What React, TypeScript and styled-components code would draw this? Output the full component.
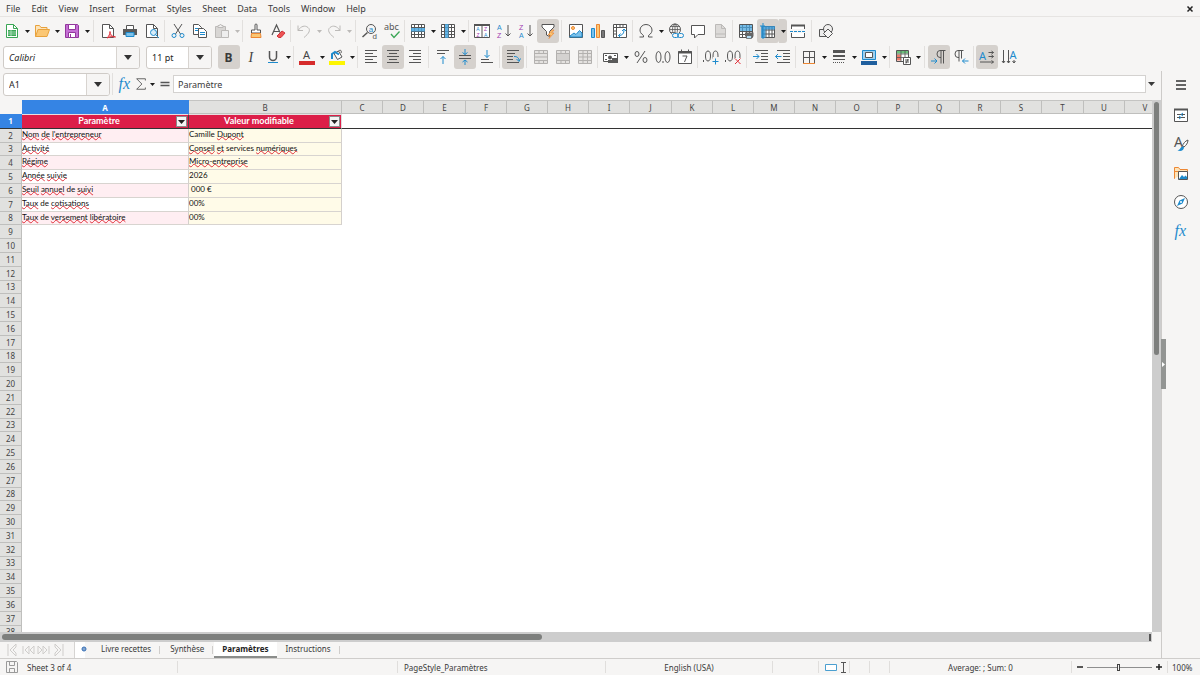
import React from "react";
import styled, { createGlobalStyle, css } from "styled-components";

const Global = createGlobalStyle`
  *, *::before, *::after { box-sizing: border-box; }
  body {
    margin: 0;
    background: #f6f5f4;
    color: #3a3a3a;
    font-family: "Noto Sans", "Open Sans", sans-serif;
    font-size: 9px;
  }
  button, input, select { font: inherit; color: inherit; margin: 0; }
  button { border: 0; padding: 0; background: none; }
  svg { display: block; flex: none; overflow: visible; }
`;

const INK = "#555";
const BLUE = "#1e8bcd";
const ORANGE = "#ed8733";
const GREY = "#bcbab8";
const PLUM = "#a03ab0";

/* ---------- frame ---------- */

const Window = styled.div`
  display: flex;
  flex-direction: column;
  height: 100vh;
  overflow: hidden;
`;

const MenuBar = styled.nav`
  display: flex;
  align-items: center;
  height: 17px;
  flex: none;
  padding: 1px 5px 0 6px;
  border-bottom: 1px solid #e6e4e2;
`;

const MenuItem = styled.button`
  margin-right: 11px;
  line-height: 16px;
`;

const CloseButton = styled.button`
  margin-left: auto;
  width: 11px;
  height: 12px;
  display: grid;
  place-items: center;
`;

const Toolbar = styled.div<{ $first?: boolean }>`
  display: flex;
  align-items: center;
  flex: none;
  height: ${(p) => (p.$first ? 28 : 26)}px;
  padding: ${(p) => (p.$first ? "0 1px" : "0 3px 2px")};
`;

const ToolButton = styled.button<{ $on?: boolean }>`
  width: 22px;
  height: 24px;
  flex: none;
  display: grid;
  place-items: center;
  border-radius: 3px;
  background: ${(p) => (p.$on ? "#d5d1cd" : "transparent")};
`;

const ArrowButton = styled.button<{ $on?: boolean; $dim?: boolean }>`
  width: 8px;
  height: 24px;
  flex: none;
  display: grid;
  place-items: center;
  color: ${(p) => (p.$dim ? "#bcbab8" : "#1c1c1c")};
  ${(p) => p.$on && css`background: #d5d1cd; border-radius: 0 3px 3px 0;`}
`;

const Separator = styled.span<{ $wide?: boolean }>`
  flex: none;
  width: 1px;
  height: 22px;
  margin: 0 ${(p) => (p.$wide ? 3 : 2)}px 0 ${(p) => (p.$wide ? 2 : 1)}px;
  background: #e2e0de;
`;

const Combo = styled.label<{ $width: number }>`
  display: grid;
  grid-template-columns: 1fr 23px;
  align-items: stretch;
  flex: none;
  width: ${(p) => p.$width}px;
  height: 23px;
  border: 1px solid #cfcbc7;
  border-radius: 3px;
  background: #fff;
  overflow: hidden;
`;

const ComboSelect = styled.select<{ $italic?: boolean }>`
  grid-area: 1 / 1 / 2 / 3;
  appearance: none;
  border: 0;
  outline: 0;
  padding: 0 5px;
  background: transparent;
  color: #1f1f1f;
  font-style: ${(p) => (p.$italic ? "italic" : "normal")};
`;

const ComboArrow = styled.span`
  grid-area: 1 / 2;
  display: grid;
  place-items: center;
  border-left: 1px solid #d8d4d0;
  background: #f6f5f4;
  color: #333;
  pointer-events: none;
`;

const Fonts = styled.div`
  display: flex;
  gap: 6px;
  margin-right: 6px;
`;

const Main = styled.div`
  display: flex;
  flex: 1;
  min-height: 0;
  border-bottom: 1px solid #cfcdcb;
`;

const Work = styled.div`
  display: flex;
  flex-direction: column;
  flex: 1;
  min-width: 0;
`;

const FormulaBar = styled.div`
  display: flex;
  align-items: center;
  flex: none;
  height: 29px;
  padding: 0 4px 3px 3px;
`;

const FormulaButton = styled.button<{ $width: number }>`
  width: ${(p) => p.$width}px;
  height: 22px;
  flex: none;
  display: grid;
  place-items: center;
`;

const FormulaInput = styled.input`
  flex: 1;
  min-width: 0;
  height: 18px;
  border: 1px solid #d4d2d0;
  padding: 0 4px;
  background: #fff;
  outline: 0;
`;

/* ---------- sheet ---------- */

const SheetArea = styled.div`
  display: grid;
  grid-template-columns: 1fr 9px;
  grid-template-rows: 1fr 10px;
  flex: 1;
  min-height: 0;
`;

const SheetClip = styled.div`
  overflow: hidden;
  min-width: 0;
  min-height: 0;
  background: #fff;
`;

const VScroll = styled.div`
  padding: 2px 1px 2px 2px;
  background: #cdcdcd;
`;

const VThumb = styled.div`
  width: 5px;
  height: 48%;
  border-radius: 3px;
  background: #7d7f7d;
`;

const HScroll = styled.div`
  display: flex;
  align-items: center;
  justify-content: space-between;
  padding: 0 1px 0 2px;
  background: #cdcdcd;
`;

const HThumb = styled.div`
  width: 47%;
  height: 6px;
  border-radius: 3px;
  background: #7d7f7d;
`;

const HEnd = styled.span`
  width: 2px;
  height: 7px;
  background: #555;
`;

const Grid = styled.table`
  table-layout: fixed;
  width: 1px;
  border-collapse: separate;
  border-spacing: 0;
`;

const Col = styled.col<{ $w: number }>`
  width: ${(p) => p.$w}px;
`;

const Row = styled.tr<{ $h: number }>`
  height: ${(p) => p.$h}px;
`;

const headCell = css`
  padding: 0;
  font-size: 8px;
  font-weight: 400;
  line-height: 12px;
  text-align: center;
  overflow: hidden;
  color: #444;
  background: #e1e1df;
  border-right: 1px solid #bfbfbd;
`;

const Corner = styled.td`
  padding: 0;
  background: #f6f5f4;
`;

const ColHead = styled.th<{ $on?: boolean }>`
  ${headCell}
  padding-top: 1px;
  line-height: 11px;
  border-top: 1px solid #c4c4c2;
  border-bottom: 1px solid #bfbfbd;
  ${(p) => p.$on && css`
    background: #3584e4; color: #fff; font-weight: 700;
    border-color: #3584e4;
  `}
`;

const RowHead = styled.th<{ $on?: boolean }>`
  ${headCell}
  border-bottom: 1px solid #bfbfbd;
  ${(p) => p.$on && css`
    background: #3584e4; color: #fff; font-weight: 700;
    border-right-color: #3584e4;
    border-bottom-color: #333;
  `}
`;

const Cell = styled.td<{ $tone: "rose" | "plain" | "cream" }>`
  padding: 0;
  font-family: Lato, "Noto Sans", sans-serif;
  font-size: 8px;
  line-height: 11px;
  vertical-align: top;
  white-space: nowrap;
  overflow: hidden;
  color: #111;
  border-right: 1px solid #d4d0cc;
  border-bottom: 1px solid #d8d4d0;
  background: ${(p) => ({ rose: "#ffeef2", plain: "#fff", cream: "#fffbe8" }[p.$tone])};
`;

const TitleCell = styled.td<{ $active?: boolean }>`
  padding: 0;
  vertical-align: top;
  background: #dc1e48;
  color: #fff;
  font-family: Lato, "Noto Sans", sans-serif;
  font-size: 9px;
  font-weight: 700;
  line-height: 11px;
  border-top: 1px solid #eadde0;
  border-right: 1px solid ${(p) => (p.$active ? "#444" : "#ddd")};
  border-bottom: 1px solid #333;
`;

const TitleInner = styled.div`
  display: flex;
  align-items: flex-start;
  padding-right: 1px;

  span { flex: 1; text-align: center; }
`;

const FilterButton = styled.button`
  width: 11px;
  height: 11px;
  margin-top: 1px;
  display: grid;
  place-items: center;
  border: 1px solid #8a8a8a;
  background: #f4f4f4;
  color: #222;
`;

const FrozenCell = styled.td`
  padding: 0;
  border-bottom: 1px solid #333;
`;

const Misspelt = styled.span`
  text-decoration: underline wavy #e0303a 1px;
  text-underline-offset: -1px;
  text-decoration-skip-ink: none;
`;

/* ---------- tabs ---------- */

const TabBar = styled.div`
  display: flex;
  align-items: center;
  flex: none;
  height: 16px;
  padding-left: 5px;
  font-size: 8px;
`;

const NavButton = styled.button`
  width: 15px;
  height: 14px;
  display: grid;
  place-items: center;
`;

const AddSheet = styled.button`
  width: 13px;
  height: 16px;
  padding-bottom: 2px;
  margin: 0 5px 0 9px;
  display: grid;
  place-items: center end;
  background: linear-gradient(#fff, #fff) left / 10px 100% no-repeat;
  border-left: 1px solid #d6d4d2;
`;

const Tab = styled.button<{ $on?: boolean }>`
  height: 16px;
  padding: 0 9px 2px;
  line-height: 12px;
  border-right: 1px solid transparent;
  background: linear-gradient(#cfcdcb, #cfcdcb) right center / 1px 8px no-repeat;
  ${(p) => p.$on && css`
    background: #fff;
    color: #222;
    font-weight: 700;
    padding: 0 8px;
    border-right: 0;
    border-bottom: 2px solid #8b8d8b;
  `}
`;

/* ---------- sidebar ---------- */

const Sidebar = styled.aside`
  position: relative;
  display: flex;
  flex-direction: column;
  align-items: center;
  gap: 7px;
  flex: none;
  width: 39px;
  padding-top: 3px;
  border-left: 1px solid #cdcbc9;
`;

const SideButton = styled.button`
  width: 22px;
  height: 22px;
  display: grid;
  place-items: center;

  &:first-child { margin-bottom: 1px; }
`;

const SideHandle = styled.button`
  position: absolute;
  left: -1px;
  top: 268px;
  width: 5px;
  height: 50px;
  background: #939593;
  display: grid;
  place-items: center;
`;

/* ---------- status bar ---------- */

const StatusBar = styled.footer`
  display: grid;
  grid-template-columns: 178fr 220fr 208fr 167fr 46px 31px 20px 20px 182fr 96px 32px;
  align-items: center;
  flex: none;
  height: 16px;
  font-size: 8px;
`;

const Status = styled.div<{ $center?: boolean }>`
  display: flex;
  align-items: center;
  justify-content: ${(p) => (p.$center ? "center" : "flex-start")};
  gap: 9px;
  height: 12px;
  padding: 0 6px;
  line-height: 11px;
  white-space: nowrap;
  border-right: 1px solid #e0dedc;
  &:last-child { border: 0; padding: 0 4px; }
`;

const ModeStatus = styled(Status)`
  gap: 4px;
`;

const ZoomStatus = styled(Status)`
  gap: 3px;
  padding: 0 4px;
`;

const ZoomSlider = styled.input`
  appearance: none;
  flex: 1;
  min-width: 0;
  height: 9px;
  margin: 0;
  background: linear-gradient(#8f8f8f, #8f8f8f) center / 100% 1px no-repeat;
  &::-webkit-slider-thumb {
    appearance: none;
    width: 3px;
    height: 7px;
    border: 1px solid #444;
    background: #f6f5f4;
  }
`;

/* ---------- drawings ---------- */

const Tri = ({ w = 5 }: { w?: number }) => (
  <svg width={w} height={w === 5 ? 3 : w === 7 ? 4 : 5} viewBox="0 0 10 6" preserveAspectRatio="none">
    <path d="M0 0h10L5 6z" fill="currentColor" />
  </svg>
);

const lines = (rows: [number, number, number][], c = INK) =>
  rows.map(([x, y, w], i) => <path key={i} d={`M${x} ${y}h${w}`} stroke={c} />);

const glyph = (t: string, x: number, y: number, s: number, c: string, extra: object = {}) => (
  <text x={x} y={y} fontSize={s} fill={c} stroke="none" fontFamily="Liberation Sans, sans-serif" {...extra}>{t}</text>
);

const noto = { fontFamily: "Noto Sans, sans-serif" };

const merge = (
  <g stroke="#b3b1af">
    <path d="M1.5 1.5h13v13h-13z" fill="#e4e2e0" />
    <path d="M1.5 4.5h13M1.5 11.5h13M1.5 8h13M6 1.5v3M10.5 1.5v3M6 11.5v3M10.5 11.5v3" />
  </g>
);

const tableGrid = (
  <path d="M1.5 1.5h13v13h-13zM1.5 4.5h13M1.5 8.5h13M1.5 11.5h13M4.5 1.5v13M8.5 1.5v13M11.5 1.5v13" stroke={INK} />
);

const art: Record<string, React.ReactNode> = {
  new: <><path d="M2.5 1.5h7l4 4v9h-11z" fill="#fff" stroke="#3aa655" /><path d="M9.5 1.5v4h4" stroke="#3aa655" /><path d="M4 7h8v6H4z" fill="#3aa655" /><path d="M4 9h8M4 11h8M7 7v6" stroke="#c9ecd2" strokeWidth=".7" /></>,
  open: <><path d="M1.5 13.5v-11h4l1.5 2h6v2" fill="#fde3b8" stroke="#e8a23c" /><path d="M1.5 13.5 4 6.5h11.5l-2.5 7z" fill="#fbc774" stroke="#e8a23c" /></>,
  save: <><path d="M1.5 1.5h12l1 1v12h-13z" fill="#c56fd5" stroke="#92379c" /><path d="M4.5 1.5h7v5h-7zM4.5 9.5h7v5h-7z" fill="#fff" stroke="#92379c" /><path d="M6.500 11v3" stroke="#92379c" /></>,
  pdf: <><path d="M2.5 1.5h7l4 4v9h-11z" fill="#fff" stroke={INK} /><path d="M9.5 1.5v4h4" stroke={INK} /><path d="M7 15c2-2 3-4 3-6.500 0 3 2 5.500 5.500 5.500-3-1-6 0-8.500 1z" fill="#f6b5b8" stroke="#e0303a" /></>,
  print: <><path d="M4.500 6V2.500h7V6" fill="#fff" stroke={INK} /><path d="M1 6h14v6H1z" fill="#5a5a5a" /><path d="M4 9.500h8v4H4z" fill="#7cc1ea" stroke={BLUE} /></>,
  preview: <><path d="M2.5 1.5h7l4 4v9h-11z" fill="#fff" stroke={INK} /><path d="M9.5 1.5v4h4" stroke={INK} /><circle cx="9.500" cy="9.500" r="3" fill="#d7ecf9" stroke={BLUE} /><path d="M11.500 11.500l3.500 3.500" stroke={BLUE} /></>,
  cut: <><path d="M4 1l6.500 10M12 1 5.500 11" stroke={INK} /><circle cx="4" cy="12.500" r="2" stroke={BLUE} /><circle cx="12" cy="12.500" r="2" stroke={BLUE} /></>,
  copy: <><path d="M1.500 1.500h5l3 3v7h-8z" fill="#fff" stroke={INK} /><path d="M3 5.500h4M3 7.500h4" stroke={BLUE} /><path d="M6.500 5.500h5l3 3v6h-8z" fill="#fff" stroke={INK} /><path d="M8 9.500h5M8 11.500h5" stroke={BLUE} /></>,
  paste: <><path d="M1.500 3.500h10v11h-10z" fill="#d8d6d4" stroke={GREY} /><path d="M4 4.500v-2h1.500l1-1.500 1 1.500H9v2z" fill="#f0efee" stroke={GREY} /><path d="M7.500 7.500h7v7h-7z" fill="#eee" stroke={GREY} /></>,
  brush: <><path d="M7 7V2a1 1 0 0 1 2 0v5h3.500v3h-9V7z" stroke={INK} fill="#fff" /><path d="M3.500 10.500h9l.5 4H3z" fill="#fbc774" stroke={ORANGE} /></>,
  clear: <><path d="M2 12 6.500 2 10 9.500M4 8.500h5" stroke={INK} strokeWidth="1.200" /><path d="M7 13l5-5 3 2-4 4.500H8.500z" fill="#ed5353" stroke="#d0343c" /></>,
  undo: <path d="M2 2.500v5h5M2 7.500C5 3 9 2 12 4.500s1 6-4 10" stroke={GREY} />,
  redo: <path d="M14 2.500v5H9M14 7.500C11 3 7 2 4 4.500s-1 6 4 10" stroke={GREY} />,
  find: <><circle cx="9" cy="6" r="4.500" stroke={INK} />{glyph("a", 6.800, 8.500, 8, BLUE)}<path d="M5.500 9.500.500 14" stroke={INK} strokeWidth="1.500" />{glyph("d", 10.500, 15.500, 8, INK)}</>,
  spell: <>{glyph("abc", 0, 7, 9, INK, noto)}<path d="M7 11l3 3.500 5.500-6" stroke="#3aa655" strokeWidth="1.300" /></>,
  row: <><path d="M1 1h14v14H1z" fill="#fff" />{tableGrid}<path d="M1 5h14v3.500H1z" fill="#49a6de" opacity=".85" /></>,
  column: <><path d="M1 1h14v14H1z" fill="#fff" />{tableGrid}<path d="M5 1h3.500v14H5z" fill="#49a6de" opacity=".85" /></>,
  sort: <><path d="M.5 1.500h15v13H.5z" fill="#fff" stroke={INK} /><path d="M0 2h16" stroke={INK} strokeWidth="2" /><path d="M8 2v12" stroke={INK} />{glyph("A", 2.200, 8.200, 5, BLUE)}{glyph("Z", 2.500, 14, 5, PLUM)}{glyph("Z", 10, 8.200, 5, PLUM)}{glyph("A", 10, 14, 5, BLUE)}</>,
  asc: <>{glyph("A", 1, 6.500, 7, BLUE)}{glyph("Z", 1, 15, 7, PLUM)}<path d="M12 2v11M9.500 10.500 12 13l2.500-2.500" stroke={INK} /></>,
  desc: <>{glyph("Z", 1, 6.500, 7, PLUM)}{glyph("A", 1, 15, 7, BLUE)}<path d="M12 2v11M9.500 10.500 12 13l2.500-2.500" stroke={INK} /></>,
  filter: <><path d="M2 1.500h12V4L9.500 8.500v5l-3-1.500V8.500L2 4z" fill="#fff" stroke={INK} /><path d="M12 7 8 12h2.500L9 15.500l5-5.500h-2.500L14 7z" fill="#fbc774" stroke={ORANGE} strokeWidth=".7" /></>,
  image: <><path d="M1.500 1.500h13v13h-13z" fill="#fff" stroke={INK} /><circle cx="5" cy="5" r="1.500" fill="#fbc774" stroke={ORANGE} /><path d="M2 13l4-3 2 1.500 3.500-4L14 10v4H2z" fill="#7cc1ea" stroke={BLUE} /></>,
  chart: <><path d="M1.500 5.500h3v9h-3z" fill="#7cc1ea" stroke={BLUE} /><path d="M6.500 1.500h3v13h-3z" fill="#fbc774" stroke={ORANGE} /><path d="M11.500 7.500h3v7h-3z" fill="#777" stroke={INK} /></>,
  pivot: <><path d="M1.500 1.500h13v13h-13z" fill="#fff" stroke={INK} /><path d="M1.500 4.500h13M4.500 1.500v13M2 8h2M2 11h2M8 2v2M11 2v2" stroke={INK} /><path d="M6.500 12.500c4 0 5.500-2 5.500-6M10 8l2-2 2 2M8.500 10.500l-2 2 2 2" stroke={BLUE} /></>,
  omega: <path d="M1.500 14h4v-1.500C2.500 10.500 2 8.500 2 7a6 5.500 0 0 1 12 0c0 1.500-.5 3.500-3.500 5.500V14h4" stroke={INK} />,
  link: <><circle cx="7" cy="6.500" r="5.500" stroke={INK} /><path d="M1.500 6.500h11M7 1v11M2.500 3.500h9M2.500 9.500h5" stroke={INK} strokeWidth=".8" /><ellipse cx="7" cy="6.500" rx="2.500" ry="5.500" stroke={INK} strokeWidth=".8" /><path d="M4 10h12v6H4z" fill="#f6f5f4" /><rect x="4.500" y="10.500" width="6" height="4" rx="2" stroke={BLUE} /><rect x="9.500" y="10.500" width="6" height="4" rx="2" stroke={BLUE} /></>,
  comment: <path d="M1.500 2.500h13v9H8L4.500 15v-3.500h-3z" fill="#fff" stroke={INK} />,
  headfoot: <><path d="M3.500 1.500h6l4 4v9h-10z" fill="#dcdad8" stroke={GREY} /><path d="M4 11h9M9.500 1.500v4h4" stroke={GREY} /></>,
  area: <><path d="M1 1h14v14H1z" fill="#fff" />{tableGrid}<path d="M2 2h12v6H2z" fill="#49a6de" opacity=".75" /><path d="M7 9.500h8.500v4H7z" fill="#666" /><path d="M8.500 12.500h5v3h-5z" fill="#b5dcf3" stroke={INK} strokeWidth=".7" /></>,
  freeze: <><path d="M2.500 3.500h12v11h-12z" fill="#fff" /><path d="M2.500 3.500h12v11h-12zM2.500 7h12M2.500 11h12M6 3.500v11M9 3.500v11M12 3.500v11" stroke={INK} /><path d="M1 3h4.500v12H1zM5 3h10v3.500H5z" fill="#2f92d2" opacity=".8" /><path d="M3 0v16M0 3h5" stroke={BLUE} /></>,
  split: <><path d="M1.500 6V2.500h13V6M1.500 10v4.500h13V10" fill="#fff" stroke={INK} /><path d="M1 2.500h14" stroke={INK} strokeWidth="2" /><path d="M0 8.500h16" stroke={BLUE} strokeDasharray="3 1" /></>,
  shapes: <><path d="M1.500 6.500h7v7h-7z" fill="#eee" stroke={INK} /><circle cx="10" cy="6" r="4.500" fill="#f0efee" stroke={INK} /><path d="M10 6l4.500 4.500L10 15l-4.500-4.500z" fill="#f6f5f4" stroke={INK} /></>,
  bold: glyph("B", 3.500, 12.500, 12, "#3a3a3a", { fontWeight: 700, ...noto }),
  italic: glyph("I", 5.500, 12.500, 14, "#444", { fontStyle: "italic", fontFamily: "Liberation Serif, serif" }),
  underline: <><path d="M4.500 2v6a3.500 3.500 0 0 0 7 0V2" stroke={INK} strokeWidth="1.500" /><path d="M3 13.500h10" stroke={BLUE} /></>,
  color: <>{glyph("A", 4, 9.500, 11, "#444", noto)}<path d="M0 12h16v4H0z" fill="#d62c2c" /></>,
  fill: <><path d="M5 4.500 9.500 2l3.500 6-4.500 2.500z" fill="#fff" stroke={INK} /><path d="M3 10V5l3-2 4 2.500" stroke={BLUE} strokeWidth="2" /><path d="M9.500 2c2-1.500 3.500-.500 2.500 2" stroke={INK} /><path d="M0 12h16v4H0z" fill="#fdf501" /></>,
  left: lines([[2, 1.500, 12], [2, 4.500, 8], [2, 7.500, 12], [2, 10.500, 8], [2, 13.500, 12]]),
  center: lines([[2, 1.500, 12], [4, 4.500, 8], [2, 7.500, 12], [4, 10.500, 8], [2, 13.500, 12]]),
  right: lines([[2, 1.500, 12], [6, 4.500, 8], [2, 7.500, 12], [6, 10.500, 8], [2, 13.500, 12]]),
  top: <>{lines([[2, 1.500, 12], [2, 4.500, 8]])}<path d="M8 15V7.500M5.500 10 8 7.500l2.500 2.500" stroke={BLUE} /></>,
  middle: <>{lines([[2, 6.500, 12], [2, 9.500, 12]])}<path d="M8 0v5.500M5.500 3.500 8 5.500l2.500-2M8 16v-5M5.500 13 8 11l2.500 2" stroke={BLUE} /></>,
  bottom: <>{lines([[2, 10.500, 8], [2, 13.500, 12]])}<path d="M8 1v7.500M5.500 6 8 8.500 10.500 6" stroke={BLUE} /></>,
  wrap: <>{lines([[2, 1.500, 12], [2, 4.500, 8], [2, 7.500, 6], [2, 10.500, 6], [2, 13.500, 12]])}<path d="M9 7.500c3 0 5 1 5 4.500M11.500 10l2.500 2.500 1.500-3" stroke={BLUE} /></>,
  merge,
  merge2: <>{merge}<path d="M2 5h12v6H2z" fill="#d4d2d0" /></>,
  unmerge: <>{merge}<path d="M6 4v8M10.500 4v8" stroke="#b3b1af" /></>,
  currency: <><path d="M.5 4.500h14v8H.5z" fill="#fff" stroke={INK} /><circle cx="7" cy="8.500" r="2" fill={INK} /><path d="M2 6.500h2M11 6.500h2M2 10.500h2" stroke={INK} /><path d="M9 9h6v5H9zM5 11h4v3H5z" fill="#5a5a5a" /></>,
  percent: <><ellipse cx="4" cy="5" rx="2" ry="2.500" stroke={INK} /><ellipse cx="12" cy="11" rx="2" ry="2.500" stroke={INK} /><path d="M12 2 4 14" stroke={INK} /></>,
  number: <><ellipse cx="3.500" cy="8" rx="2.500" ry="5.500" stroke={INK} /><ellipse cx="12.500" cy="8" rx="2.500" ry="5.500" stroke={INK} /><path d="M8 12v2" stroke={INK} /></>,
  date: <><path d="M1.500 2.500h13v12h-13z" fill="#fff" stroke={INK} /><path d="M1 3.500h14" stroke={INK} strokeWidth="2" /><path d="M4.500.5v3M11.500.5v3M5.500 7H10l-2.500 6" stroke={INK} /></>,
  addDec: <><ellipse cx="5" cy="7" rx="2.500" ry="5" stroke={INK} /><ellipse cx="12.500" cy="7" rx="2.500" ry="5" stroke={INK} /><path d="M.5 11v2" stroke={INK} /><path d="M10 8h6v7h-6z" fill="#f6f5f4" /><path d="M12.500 9.500v6M9.500 12.500h6" stroke={BLUE} /></>,
  delDec: <><ellipse cx="5" cy="7" rx="2.500" ry="5" stroke={INK} /><ellipse cx="12.500" cy="7" rx="2.500" ry="5" stroke={INK} /><path d="M.5 11v2" stroke={INK} /><path d="M10 9h6v6h-6z" fill="#f6f5f4" /><path d="M10 9.500l5.500 5.500M15.500 9.500 10 15" stroke="#e0303a" /></>,
  indent: <>{lines([[2, 1.500, 13], [8, 4.500, 7], [8, 7.500, 7], [8, 10.500, 7], [2, 13.500, 13]])}<path d="M0 7.500h6M3.500 5 6 7.500 3.500 10" stroke={BLUE} /></>,
  outdent: <>{lines([[2, 1.500, 13], [8, 4.500, 7], [8, 7.500, 7], [8, 10.500, 7], [2, 13.500, 13]])}<path d="M.5 7.500h6M3 5 .5 7.500 3 10" stroke={BLUE} /></>,
  borders: <><path d="M2 2.500h12M2 8.500h12M2.500 2v12M8.500 2v12M13.500 2v12" stroke={INK} /><path d="M2 14.500h12" stroke={ORANGE} /></>,
  lineStyle: <><path d="M2 2.500h12" stroke={INK} strokeWidth="3" /><path d="M2 7h12" stroke={INK} strokeWidth="2" /><path d="M2 10.500h12" stroke={INK} /><path d="M2 13.500h12" stroke={INK} strokeDasharray="1 1" /></>,
  lineColor: <><path d="M1.500 1.500h13v9h-13z" fill="#9fd1f0" stroke={BLUE} /><path d="M4.500 3.500h7v5h-7z" fill="#fff" stroke={INK} /><path d="M0 12h16v4H0z" fill="#1f5f9e" /></>,
  cond: <><path d="M1.500 1.500h12v11h-12z" fill="#fff" stroke={INK} /><path d="M2 2h11v2.500H2z" fill="#6cc27c" /><path d="M2 5.500h4v6H2z" fill="#ed7a6a" /><path d="M1.500 5h12M1.500 8.500h12M6 1.500v11M10 1.500v11" stroke={INK} strokeWidth=".8" /><path d="M8.500 8.500h7v7h-7z" fill="#fff" stroke={INK} /><path d="M10 11h4M10 13h4M13 10l-2 4.500" stroke={INK} /></>,
  ltr: <><path d="M14.500 1.500H9a3 3.500 0 0 0 0 7h1M10 1.500v13M12.500 1.500v13" stroke={INK} /><path d="M0 12h6M3.500 9.500 6 12l-2.500 2.500" stroke={BLUE} /></>,
  rtl: <><path d="M10.500 1.500H5a3 3.500 0 0 0 0 7h1M6 1.500v11M8.500 1.500v8" stroke={INK} /><path d="M15.500 12h-6M12 9.500 9.500 12l2.500 2.500" stroke={BLUE} /></>,
  textH: <>{glyph("A", 0, 10.500, 11, BLUE, noto)}<path d="M9.500 3.500h5M9.500 7.500h5M1 13h13.500M12.500 2l2 1.500-2 1.500M12.500 6l2 1.500-2 1.500M12.500 11.500l2 1.500-2 1.500" stroke={INK} /></>,
  textV: <>{glyph("A", 8.500, 10, 11, BLUE, noto)}<path d="M2.500 1v13M7.500 1v13M13 11v3M1 12l1.500 2L4 12M6 12l1.500 2L9 12M11.500 12l1.500 2 1.500-2" stroke={INK} /></>,
  fx: glyph("fx", 1.500, 12.500, 16, BLUE, { fontStyle: "italic", fontFamily: "Liberation Serif, serif" }),
  sigma: <path d="M13 4V2H3l6 6-6 6h10v-2" stroke={INK} />,
  equals: <path d="M3.500 6.500h9M3.500 9.500h9" stroke={INK} strokeWidth="1.500" />,
  menu: <path d="M3 4h10M3 8h10M3 12h10" stroke="#333" strokeWidth="1.500" />,
  props: <><path d="M1.500 2.500h13v12h-13z" fill="#fff" stroke={INK} /><path d="M1 2.500h14" stroke={INK} strokeWidth="2" /><path d="M4 7.500h8M4 10.500h8" stroke={INK} /><path d="M10 6 8 7.500l2 1.500M6 9l2 1.500L6 12" stroke={BLUE} /></>,
  styles: <>{glyph("A", 1, 11, 14, INK, noto)}<path d="M15 4c-3 1-5 4-5.500 6l1.500 1c2-1.500 4-4 4-7z" fill="#fff" stroke={INK} /><path d="M9.500 10.500C7 11 8 13.500 4.500 14.500c3 1 6.500.5 6.500-3.500z" fill={BLUE} /></>,
  gallery: <><path d="M1.500 13.500v-11h4l1.500 2h7.500v2" fill="#fde3b8" stroke={ORANGE} /><path d="M1.500 13.500V6.500h5" stroke={ORANGE} /><path d="M5.500 6.500h9v8h-9z" fill="#fff" stroke={INK} /><path d="M6 14l3-4 2 2 1.500-1.500L14 12v2z" fill={BLUE} /></>,
  navigator: <><circle cx="8" cy="8" r="6.500" fill="#fff" stroke={INK} /><path d="M12 4 9.500 9.500 4 12l2.500-5.500z" fill={BLUE} /><circle cx="8" cy="8" r="1" fill="#fff" /></>,
};

const Icon = ({ name }: { name: string }) => (
  <svg width="16" height="16" viewBox="0 0 16 16" fill="none" aria-hidden="true">
    {art[name]}
  </svg>
);

/* ---------- data ---------- */

/* "|" separates groups, "||" is the wider gap; "v" adds a drop-down, "!" is pressed, "~" is disabled */
const standard = "new:v open:v save:v || pdf print preview | cut copy paste:v~ | brush clear | undo:v~ redo:v~ || find spell | row:v column:v | sort asc desc filter:! || image chart pivot | omega:v link comment headfoot | area freeze:v! split || shapes";
const formatting = "bold:! italic underline:v | color:v fill:v | left center:! right || top middle:! bottom | wrap:! || merge merge2 unmerge | currency:v percent number date | addDec delDec || indent outdent | borders:v lineStyle:v lineColor:v | cond:v || ltr:! rtl | textH:! textV";

const Tools = ({ spec }: { spec: string }) => (
  <>
    {spec.split(" ").map((token, i) => {
      if (token[0] === "|") return <Separator key={i} $wide={token === "||"} />;
      const [name, flags = ""] = token.split(":");
      const on = flags.includes("!");
      return (
        <React.Fragment key={i}>
          <ToolButton aria-label={name} aria-pressed={on} $on={on}><Icon name={name} /></ToolButton>
          {flags.includes("v") && (
            <ArrowButton aria-label={`${name} options`} $on={on} $dim={flags.includes("~")}><Tri /></ArrowButton>
          )}
        </React.Fragment>
      );
    })}
  </>
);

const DropDown = ({ label, value, width, italic }: { label: string; value: string; width: number; italic?: boolean }) => (
  <Combo $width={width}>
    <ComboSelect aria-label={label} $italic={italic} defaultValue={value}>
      <option>{value}</option>
    </ComboSelect>
    <ComboArrow><Tri w={8} /></ComboArrow>
  </Combo>
);

const menus = ["File", "Edit", "View", "Insert", "Format", "Styles", "Sheet", "Data", "Tools", "Window", "Help"];
const columns = "CDEFGHIJKLMNOPQRSTUV".split("");

/* words wrapped in underscores are flagged by the spell checker */
const data: [string, string][] = [
  ["_Nom_ _de_ _l'entrepreneur_", "Camille _Dupont_"],
  ["_Activité_", "_Conseil_ _et_ services _numériques_"],
  ["_Régime_", "_Micro-entreprise_"],
  ["_Année_ _suivie_", "2026"],
  ["_Seuil_ _annuel_ de _suivi_", "\u00a0000 €"],
  ["_Taux_ de _cotisations_", "00%"],
  ["_Taux_ de _versement_ _libératoire_", "00%"],
];

const Words = ({ text }: { text: string }) => (
  <>{text.split("_").map((part, i) => (i % 2 ? <Misspelt key={i}>{part}</Misspelt> : part))}</>
);

const Title = ({ text, active }: { text: string; active?: boolean }) => (
  <TitleCell $active={active}>
    <TitleInner>
      <span>{text}</span>
      <FilterButton aria-label={`Filter ${text}`}><Tri w={7} /></FilterButton>
    </TitleInner>
  </TitleCell>
);

const Sheet = () => (
  <Grid>
    <colgroup>
      <Col $w={22} />
      <Col $w={167} />
      <Col $w={153} />
      {columns.map((c, i) => <Col key={c} $w={i % 5 === 2 ? 42 : 41} />)}
    </colgroup>
    <thead>
      <Row $h={14}>
        <Corner />
        <ColHead $on>A</ColHead>
        <ColHead>B</ColHead>
        {columns.map((c) => <ColHead key={c}>{c}</ColHead>)}
      </Row>
    </thead>
    <tbody>
      <Row $h={15}>
        <RowHead $on>1</RowHead>
        <Title text="Paramètre" active />
        <Title text="Valeur modifiable" />
        <FrozenCell colSpan={columns.length} />
      </Row>
      {Array.from({ length: 37 }, (_, i) => {
        const row = data[i];
        return (
          <Row key={i} $h={i % 5 === 1 ? 13 : 14}>
            <RowHead>{i + 2}</RowHead>
            {row && <Cell $tone={i % 2 ? "plain" : "rose"}><Words text={row[0]} /></Cell>}
            {row && <Cell $tone="cream"><Words text={row[1]} /></Cell>}
          </Row>
        );
      })}
    </tbody>
  </Grid>
);

const navShapes = [
  "M2 1v12M10 1 4 7l6 6V10L7 7l3-3z",
  "M8 3 4 7l4 4zM13 3 9 7l4 4zM2 3v8",
  "M2 3l4 4-4 4zM7 3l4 4-4 4zM13 3v8",
  "M12 1v12M4 1l6 6-6 6V10l3-3-3-3z",
];

export default function App() {
  return (
    <>
      <Global />
      <Window>
        <MenuBar>
          {menus.map((m) => <MenuItem key={m}>{m}</MenuItem>)}
          <CloseButton aria-label="Close document">
            <svg width="6" height="6" viewBox="0 0 6 6"><path d="M.5.5l5 5M5.500.5l-5 5" stroke="#222" strokeWidth="1.500" /></svg>
          </CloseButton>
        </MenuBar>

        <Toolbar $first><Tools spec={standard} /></Toolbar>
        <Toolbar>
          <Fonts>
            <DropDown label="Font name" value="Calibri" width={137} italic />
            <DropDown label="Font size" value="11 pt" width={66} />
          </Fonts>
          <Tools spec={formatting} />
        </Toolbar>

        <Main>
          <Work>
            <FormulaBar>
              <DropDown label="Name box" value="A1" width={107} />
              <Separator $wide />
              <FormulaButton $width={18} aria-label="Function wizard"><Icon name="fx" /></FormulaButton>
              <FormulaButton $width={14} aria-label="Select function">
                <svg width="14" height="14" viewBox="0 0 16 16" fill="none">{art.sigma}</svg>
              </FormulaButton>
              <ArrowButton aria-label="Function options"><Tri /></ArrowButton>
              <FormulaButton $width={17} aria-label="Formula"><Icon name="equals" /></FormulaButton>
              <FormulaInput aria-label="Input line" defaultValue="Paramètre" />
              <FormulaButton $width={11} aria-label="Expand formula bar"><Tri w={7} /></FormulaButton>
            </FormulaBar>

            <SheetArea>
              <SheetClip><Sheet /></SheetClip>
              <VScroll><VThumb /></VScroll>
              <HScroll><HThumb /><HEnd /></HScroll>
            </SheetArea>

            <TabBar>
              {navShapes.map((d, i) => (
                <NavButton key={d} aria-label={["First", "Previous", "Next", "Last"][i] + " sheet"}>
                  <svg width="14" height="14" viewBox="0 0 14 14"><path d={d} fill="none" stroke="#cfcdcb" /></svg>
                </NavButton>
              ))}
              <AddSheet aria-label="Add sheet">
                <svg width="6" height="6" viewBox="0 0 6 6"><circle cx="3" cy="3" r="2" fill="#fff" stroke="#2a66b0" /><path d="M1 3h4M3 1v4" stroke="#2a66b0" strokeWidth=".7" /></svg>
              </AddSheet>
              <Tab>Livre recettes</Tab>
              <Tab>Synthèse</Tab>
              <Tab $on>Paramètres</Tab>
              <Tab>Instructions</Tab>
            </TabBar>
          </Work>

          <Sidebar>
            {["menu", "props", "styles", "gallery", "navigator", "fx"].map((n) => (
              <SideButton key={n} aria-label={n}><Icon name={n} /></SideButton>
            ))}
            <SideHandle aria-label="Hide sidebar">
              <svg width="3" height="5" viewBox="0 0 3 5"><path d="M0 0l3 2.500L0 5z" fill="#fff" /></svg>
            </SideHandle>
          </Sidebar>
        </Main>

        <StatusBar>
          <Status>
            <svg width="12" height="12" viewBox="0 0 12 12" fill="none" stroke="#9a9a9a"><path d="M.5.5h10l1 1v10H.5zM3.500.5v4h5v-4M3.500 11.500v-4h5v4" /></svg>
            <span>Sheet 3 of 4</span>
          </Status>
          <Status />
          <Status>PageStyle_Paramètres</Status>
          <Status $center>English (USA)</Status>
          <Status />
          <ModeStatus>
            <svg width="12" height="7" viewBox="0 0 12 7"><path d="M.5.5h11v6H.5z" fill="#fff" stroke="#4b9fd0" /></svg>
            <svg width="5" height="11" viewBox="0 0 5 11"><path d="M0 .5h5M0 10.500h5M2.500.5v10" stroke="#555" /></svg>
          </ModeStatus>
          <Status />
          <Status />
          <Status $center>Average: ; Sum: 0</Status>
          <ZoomStatus>
            <button aria-label="Zoom out"><svg width="8" height="8" viewBox="0 0 8 8"><path d="M1 4h6" stroke="#222" strokeWidth="1.500" /></svg></button>
            <ZoomSlider type="range" aria-label="Zoom" defaultValue={48} />
            <button aria-label="Zoom in"><svg width="8" height="8" viewBox="0 0 8 8"><path d="M1 4h6M4 1v6" stroke="#222" strokeWidth="1.500" /></svg></button>
          </ZoomStatus>
          <Status>100%</Status>
        </StatusBar>
      </Window>
    </>
  );
}
